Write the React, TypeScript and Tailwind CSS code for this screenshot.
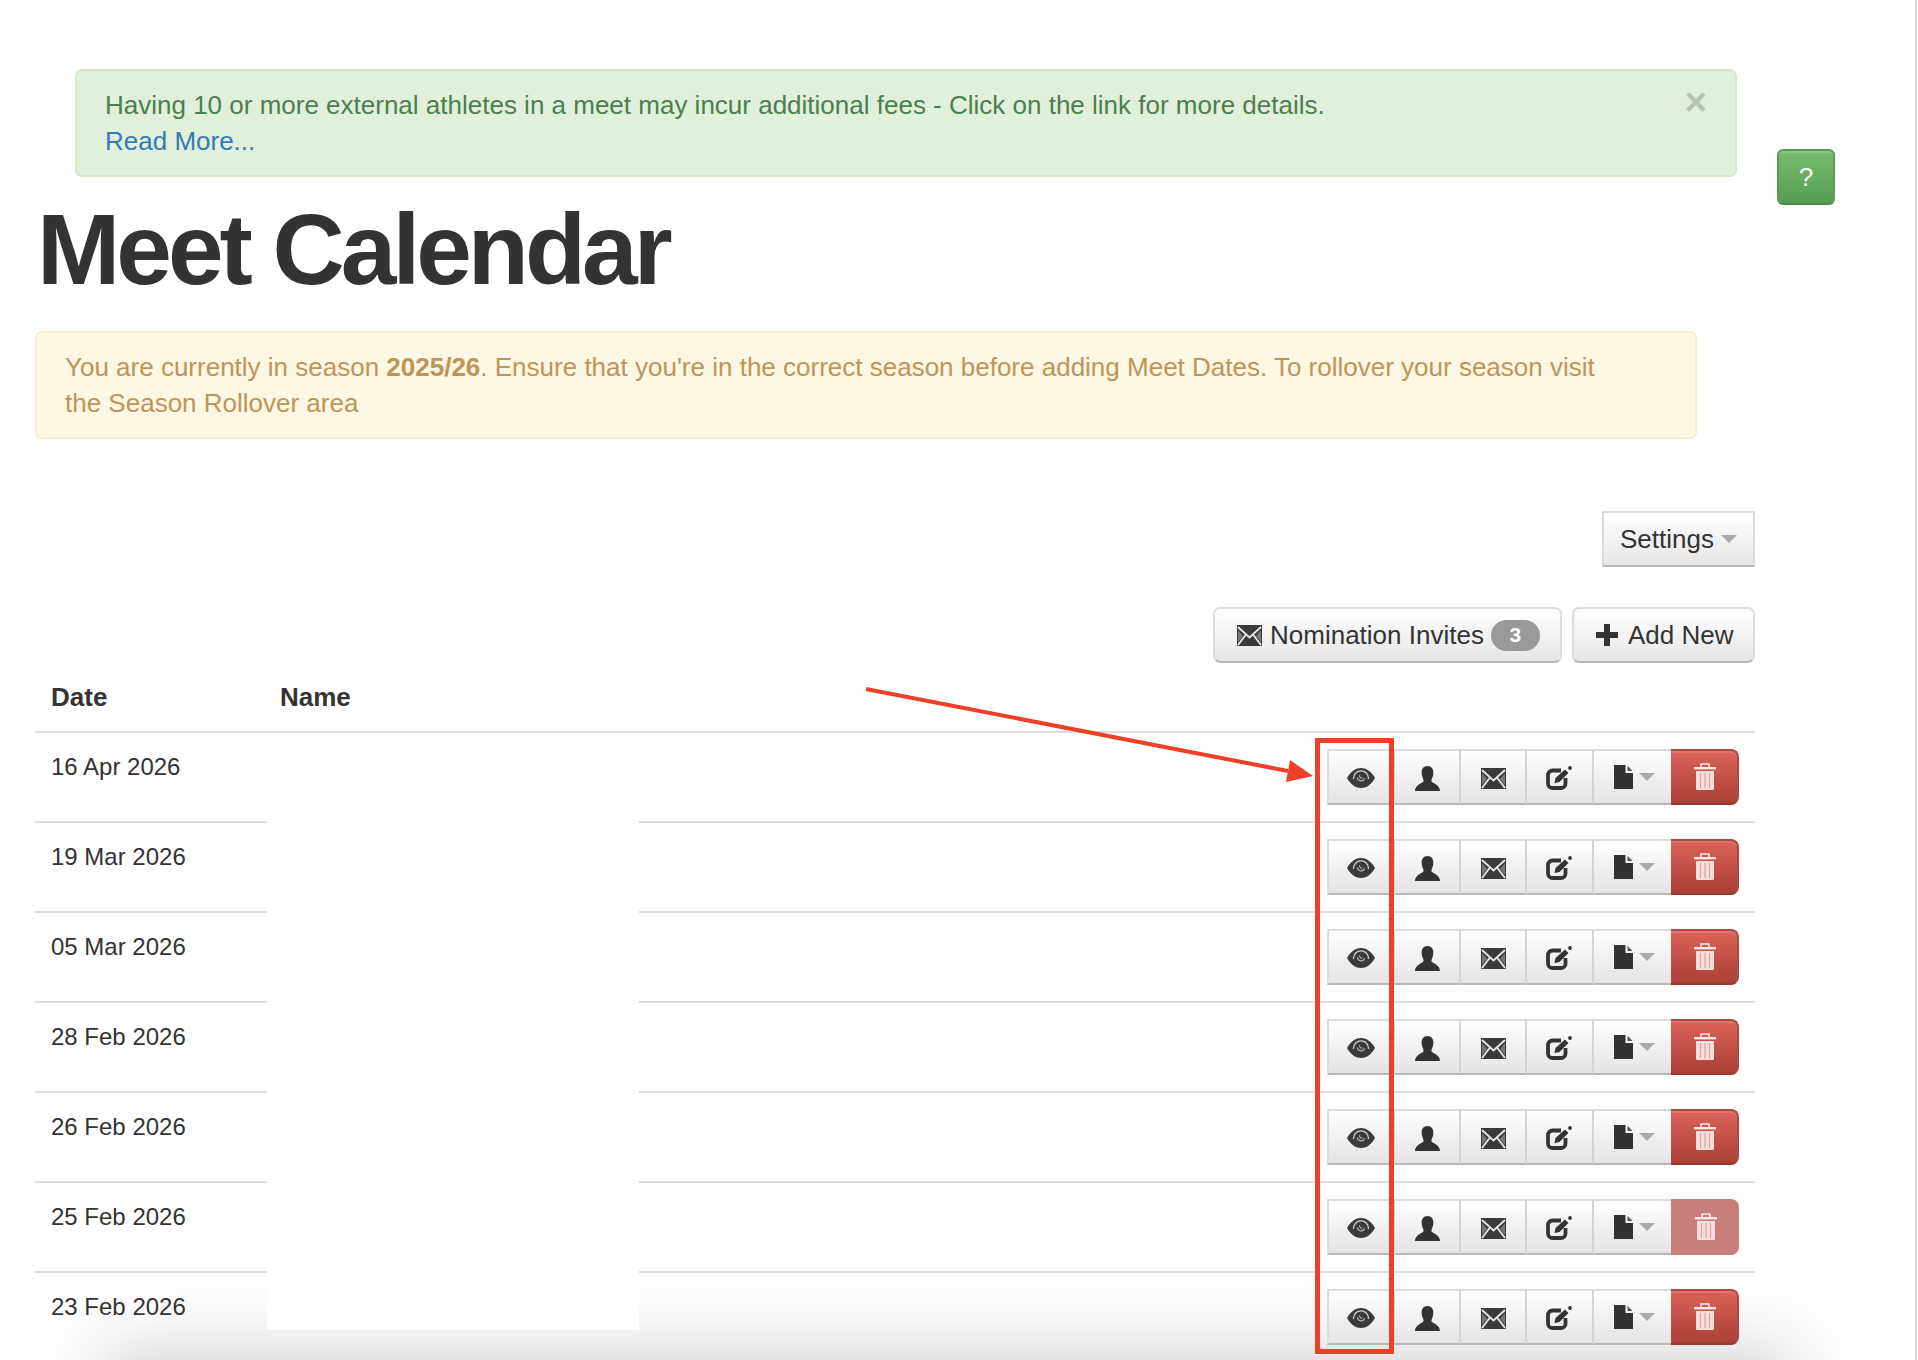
const dates = [
  "16 Apr 2026",
  "19 Mar 2026",
  "05 Mar 2026",
  "28 Feb 2026",
  "26 Feb 2026",
  "25 Feb 2026",
  "23 Feb 2026",
];

function EyeIcon() {
  return (
    <svg width="28" height="20" viewBox="0 0 28 20" className="block blur-[0.5px]">
      <path d="M0 10C4 3 9 0 14 0S24 3 28 10C24 17 19 20 14 20S4 17 0 10Z" fill="#3a3a3a" />
      <path d="M6.4 11C6.4 5.8 10 2.8 14 2.8S21.6 5.8 21.6 11" fill="none" stroke="#d0d0d0" strokeWidth="1.3" />
      <path d="M10.4 9.5C10.8 13.6 16.4 14.2 17.6 10.4" fill="none" stroke="#b0b0b0" strokeWidth="1.3" />
      <path d="M12.6 7.2C12.2 9.4 14 10.8 15.4 9.6" fill="none" stroke="#b4b4b4" strokeWidth="1.1" />
    </svg>
  );
}

function UserIcon() {
  return (
    <svg width="25" height="25" viewBox="0 0 25 25" className="block blur-[0.4px]">
      <path d="M12.5 0C16.6 0 18.4 3 18.4 6.8 18.4 10.6 16.4 12.6 16.4 15 16.4 17.2 25 18.2 25 25H0C0 18.2 8.6 17.2 8.6 15 8.6 12.6 6.6 10.6 6.6 6.8 6.6 3 8.4 0 12.5 0Z" fill="#333" />
    </svg>
  );
}

function MailIcon() {
  return (
    <svg width="25" height="21" viewBox="0 0 25 21" className="block blur-[0.5px]">
      <rect width="25" height="21" fill="#3a3a3a" />
      <path d="M1 2 12.5 12.5 24 2" fill="none" stroke="#e6e6e6" strokeWidth="1.9" />
      <path d="M1 20 9 9.5M24 20 16 9.5" fill="none" stroke="#e6e6e6" strokeWidth="1.9" />
      <path d="M1 5v12l5-6zM24 5v12l-5-6z" fill="#777" />
    </svg>
  );
}

function EditIcon() {
  return (
    <svg width="26" height="24" viewBox="0 0 26 24" className="block blur-[0.4px]">
      <path d="M15 4.5H6.5A4.5 4.5 0 0 0 2 9V17.5A4.5 4.5 0 0 0 6.5 22H15A4.5 4.5 0 0 0 19.5 17.5V12" fill="none" stroke="#333" strokeWidth="3.8" />
      <path d="M8.5 17 9.5 12 19 3.5 22.5 7 13.5 16Z" fill="#333" />
      <circle cx="24" cy="2" r="1.9" fill="#333" />
    </svg>
  );
}

function FileIcon() {
  return (
    <svg width="19" height="24" viewBox="0 0 19 24" className="block blur-[0.3px]">
      <path d="M0 0H11.5V8H19V24H0Z" fill="#333" />
      <path d="M13.5 .8 18.5 6H13.5Z" fill="#555" />
    </svg>
  );
}

function TrashIcon() {
  return (
    <svg width="22" height="27" viewBox="0 0 22 27" className="block">
      <path d="M7 4.5V1H15V4.5" fill="none" stroke="#f8e6e4" strokeWidth="1.6" />
      <rect y="4" width="22" height="2.4" fill="#f8e6e4" />
      <path d="M2 8H20V25.5A1.5 1.5 0 0 1 18.5 27H3.5A1.5 1.5 0 0 1 2 25.5Z" fill="#f6dedb" />
      <path d="M6.5 10V25M11 10V25M15.5 10V25" stroke="#dc9f99" strokeWidth="1.1" />
    </svg>
  );
}

function Caret() {
  return <span className="block h-0 w-0 border-x-[8px] border-t-[8px] border-x-transparent border-t-[#aaa]" />;
}

function ActionButton({ className, children }: { className: string; children: React.ReactNode }) {
  return (
    <span className={`flex h-[56px] items-center justify-center border-y-2 border-r-2 border-y-[#dcdcdc] border-r-[#d4d4d4] border-b-[#b8b8b8] bg-gradient-to-b from-white to-[#e4e4e4] pt-[2px] ${className}`}>
      {children}
    </span>
  );
}

function RowActions({ faded }: { faded?: boolean }) {
  return (
    <div className="flex">
      <ActionButton className="w-[68px] border-l-2 border-l-[#dcdcdc]"><EyeIcon /></ActionButton>
      <ActionButton className="w-[66px]"><UserIcon /></ActionButton>
      <ActionButton className="w-[66px]"><MailIcon /></ActionButton>
      <ActionButton className="w-[67px] pr-[2px]"><EditIcon /></ActionButton>
      <span className="flex h-[56px] w-[77px] items-center gap-[6px] border-y-2 border-y-[#dcdcdc] border-b-[#b8b8b8] bg-gradient-to-b from-white to-[#e4e4e4] pl-[20px]">
        <FileIcon />
        <Caret />
      </span>
      {faded ? (
        <span className="flex h-[56px] w-[68px] items-center justify-center rounded-r-[8px] bg-[#c97f79] pb-[2px] pl-[1px]">
          <TrashIcon />
        </span>
      ) : (
        <span className="flex h-[56px] w-[68px] items-center justify-center rounded-r-[8px] border-2 border-l-0 border-[#aa4a42] border-b-[#963a32] bg-gradient-to-b from-[#dc6259] to-[#ab3f36] pb-[2px] pl-[1px] shadow-[inset_0_2px_0_rgba(255,255,255,0.12)]">
          <TrashIcon />
        </span>
      )}
    </div>
  );
}

export default function App() {
  return (
    <div className="relative h-[1360px] w-[1918px] overflow-hidden bg-white font-['Liberation_Sans',Arial,sans-serif] text-[26px] leading-[36px] text-[#333]">
      {/* window shadow coming up from the bottom of the screenshot */}
      <div className="absolute left-[150px] right-[170px] top-[1395px] h-[40px] bg-[#ccc] shadow-[0_0_70px_50px_rgba(0,0,0,0.16)]" />

      <div className="relative">
        <div className="ml-[75px] mt-[69px] h-[108px] w-[1662px] rounded-[7px] border-2 border-[#d6e9c6] bg-[#e1f0db] px-[28px] pt-[16px] text-[#4c7f4e]">
          <div className="flex justify-between">
            <span>Having 10 or more external athletes in a meet may incur additional fees - Click on the link for more details.</span>
            <span className="-mt-[3px] text-[38px] font-bold leading-[36px] text-[#b6c2b1]">×</span>
          </div>
          <a className="text-[#337ab7]">Read More...</a>
        </div>

        <h1 className="mb-[32px] ml-[37px] mt-[22px] text-[100px] font-bold leading-[100px] tracking-[-4px] text-[#333]">Meet Calendar</h1>

        <div className="ml-[35px] h-[108px] w-[1662px] rounded-[7px] border-2 border-[#faebcc] bg-[#fdf7e3] px-[28px] pt-[16px] text-[#bd9559]">
          <div>
            You are currently in season <b>2025/26</b>. Ensure that you're in the correct season before adding Meet Dates. To rollover your season visit
          </div>
          <div>the Season Rollover area</div>
        </div>

        <div className="ml-[35px] w-[1720px]">
          <div className="mt-[72px] flex justify-end">
            <span className="flex h-[56px] w-[153px] items-center gap-[7px] border-2 border-[#dcdcdc] border-b-[#b8b8b8] bg-gradient-to-b from-white to-[#e6e6e6] pl-[16px]">
              Settings
              <Caret />
            </span>
          </div>

          <div className="mt-[40px] flex justify-end gap-[10px]">
            <span className="flex h-[56px] w-[349px] items-center rounded-[7px] border-2 border-[#dcdcdc] border-b-[#b8b8b8] bg-gradient-to-b from-white to-[#e6e6e6] pl-[22px]">
              <MailIcon />
              <span className="ml-[8px]">Nomination Invites</span>
              <span className="ml-[7px] flex h-[31px] w-[49px] items-center justify-center rounded-full bg-[#999] text-[21px] font-bold text-white">3</span>
            </span>
            <span className="flex h-[56px] w-[183px] items-center gap-[10px] rounded-[7px] border-2 border-[#dcdcdc] border-b-[#b8b8b8] bg-gradient-to-b from-white to-[#e6e6e6] pl-[22px]">
              <svg width="22" height="22" viewBox="0 0 22 22" className="block">
                <path d="M8 0H14V8H22V14H14V22H8V14H0V8H8Z" fill="#333" />
              </svg>
              Add New
            </span>
          </div>

          <div className="flex h-[68px] items-center font-bold">
            <span className="w-[228px] pl-[16px]">Date</span>
            <span className="pl-[17px]">Name</span>
          </div>

          {dates.map((date, i) => (
            <div key={date} className="flex h-[90px] justify-between border-t-2 border-[#dddddd] px-[16px] pt-[16px] text-[24px]">
              <span>{date}</span>
              <RowActions faded={i === 5} />
            </div>
          ))}
        </div>
      </div>

      {/* help button floats beside the alert */}
      <span className="absolute left-[1777px] top-[149px] flex h-[56px] w-[58px] items-center justify-center rounded-[6px] border-2 border-[#5a9a55] border-b-[#4f8a4a] bg-gradient-to-b from-[#78be70] to-[#559c52] text-white shadow-[inset_0_2px_0_rgba(255,255,255,0.15)]">?</span>

      {/* scrollbar edge */}
      <div className="absolute bottom-0 left-[1915px] top-0 w-[2px] bg-[#d5d8dc]" />

      {/* redaction over the name column */}
      <div className="absolute left-[267px] top-[734px] h-[596px] w-[372px] bg-white" />

      {/* annotation */}
      <div className="absolute left-[1315px] top-[738px] h-[616px] w-[79px] border-[5px] border-[#ee4026]" />
      <svg className="absolute left-0 top-0" width="1918" height="1360" viewBox="0 0 1918 1360">
        <path d="M866 689 1288 771" stroke="#ee4026" strokeWidth="4" fill="none" />
        <path d="M1313 776 1286 782 1290 760Z" fill="#ee4026" />
      </svg>
    </div>
  );
}
